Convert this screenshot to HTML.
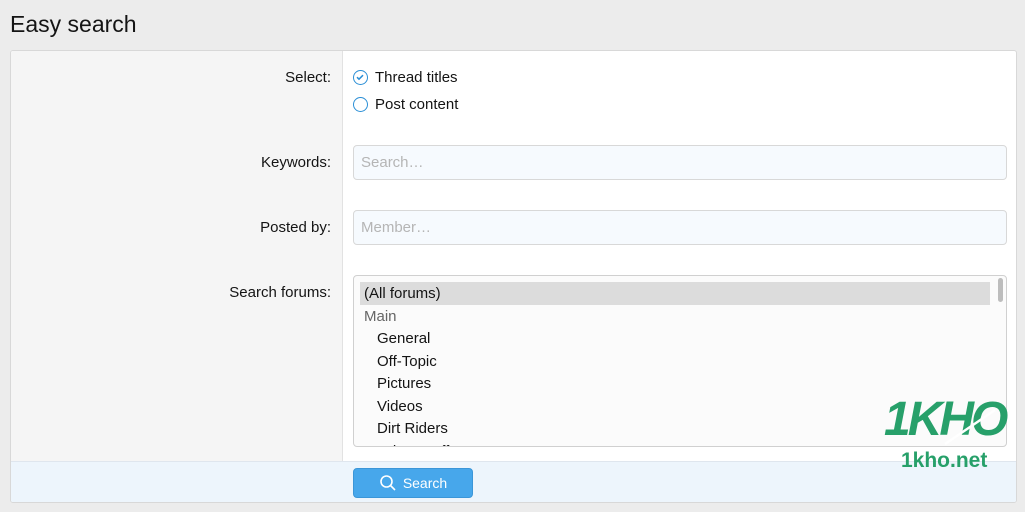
<!DOCTYPE html>
<html><head><meta charset="utf-8"><style>
*{box-sizing:border-box;margin:0;padding:0}
body{width:1025px;height:512px;background:#ececec;font-family:"Liberation Sans",Arial,sans-serif;position:relative;overflow:hidden;color:#141414}
h1{position:absolute;left:10px;top:11px;font-size:23px;font-weight:normal;color:#141414}
.panel{position:absolute;left:10px;top:50px;width:1007px;height:453px;border:1px solid #d8d8d8;border-radius:3px;background:#fff;overflow:hidden}
.left{position:absolute;left:0;top:0;width:332px;height:410px;background:#f5f5f5;border-right:1px solid #e2e2e2}
.lbl{position:absolute;right:685px;font-size:15px;text-align:right;color:#141414}
.radio{position:absolute;left:342px;font-size:15px;display:flex;align-items:center}
.radio span.c{width:15px;height:15px;border:1.5px solid #2b8fd6;border-radius:50%;margin-right:7px;display:inline-block;position:relative}
.inp{position:absolute;left:342px;width:654px;height:35px;border:1px solid #d8d8d8;border-radius:4px;background:#f6fafe;font-size:15px;color:#b5b5b5;padding:8px 7px}
.sel{position:absolute;left:342px;top:224px;width:654px;height:172px;border:1px solid #d0d0d0;border-radius:4px;background:#fbfbfb;overflow:hidden;font-size:15px}
.sel div{height:22.5px;line-height:23px;padding-left:10px}
.foot{position:absolute;left:0;top:410px;width:100%;height:43px;background:#edf5fc;border-top:1px solid #dfe6ee}
.btn{position:absolute;left:342px;top:6px;width:120px;height:30px;background:#47a7eb;border:1px solid #3b96d8;border-radius:4px;color:#fff;font-size:14px;display:flex;align-items:center;justify-content:center}
</style></head><body>
<h1>Easy search</h1>
<div class="panel">
<div class="left"></div>
<div class="lbl" style="top:18px">Select:</div>
<div class="radio" style="top:18px"><span class="c"><svg width="12" height="12" style="position:absolute;left:0;top:0" viewBox="0 0 12 12"><path d="M3 6.2l2 2 4-4" stroke="#2b8fd6" stroke-width="1.5" fill="none"/></svg></span>Thread titles</div>
<div class="radio" style="top:45px"><span class="c"></span>Post content</div>
<div class="lbl" style="top:103px">Keywords:</div>
<div class="inp" style="top:94px">Search…</div>
<div class="lbl" style="top:168px">Posted by:</div>
<div class="inp" style="top:159px">Member…</div>
<div class="lbl" style="top:233px">Search forums:</div>
<div class="sel">
<div style="margin-top:6px;background:#dcdcdc;margin-left:6px;margin-right:16px;padding-left:4px">(All forums)</div>
<div style="color:#666">Main</div>
<div style="padding-left:23px">General</div>
<div style="padding-left:23px">Off-Topic</div>
<div style="padding-left:23px">Pictures</div>
<div style="padding-left:23px">Videos</div>
<div style="padding-left:23px">Dirt Riders</div>
<div style="padding-left:23px">Other Stuff</div>
<span style="position:absolute;right:3px;top:2px;width:5px;height:24px;background:#bdbdbd;border-radius:3px"></span>
</div>
<div class="foot"><div class="btn"><svg width="18" height="18" viewBox="0 0 18 18" style="margin-right:6px"><circle cx="7.5" cy="7.5" r="5.5" stroke="#fff" stroke-width="1.6" fill="none"/><path d="M11.5 11.5l4.5 4.5" stroke="#fff" stroke-width="1.6"/></svg>Search</div></div>
</div>
<div style="position:absolute;left:884px;top:396px;font-size:48px;font-weight:bold;font-style:italic;color:#27a06a;letter-spacing:-3px;line-height:1">1KHO</div>
<svg style="position:absolute;left:940px;top:402px" width="60" height="48"><path d="M5 42L55 8" stroke="#fff" stroke-width="2.5"/></svg>
<div style="position:absolute;left:901px;top:449px;font-size:21px;font-weight:bold;color:#27a06a">1kho.net</div>
</body></html>
